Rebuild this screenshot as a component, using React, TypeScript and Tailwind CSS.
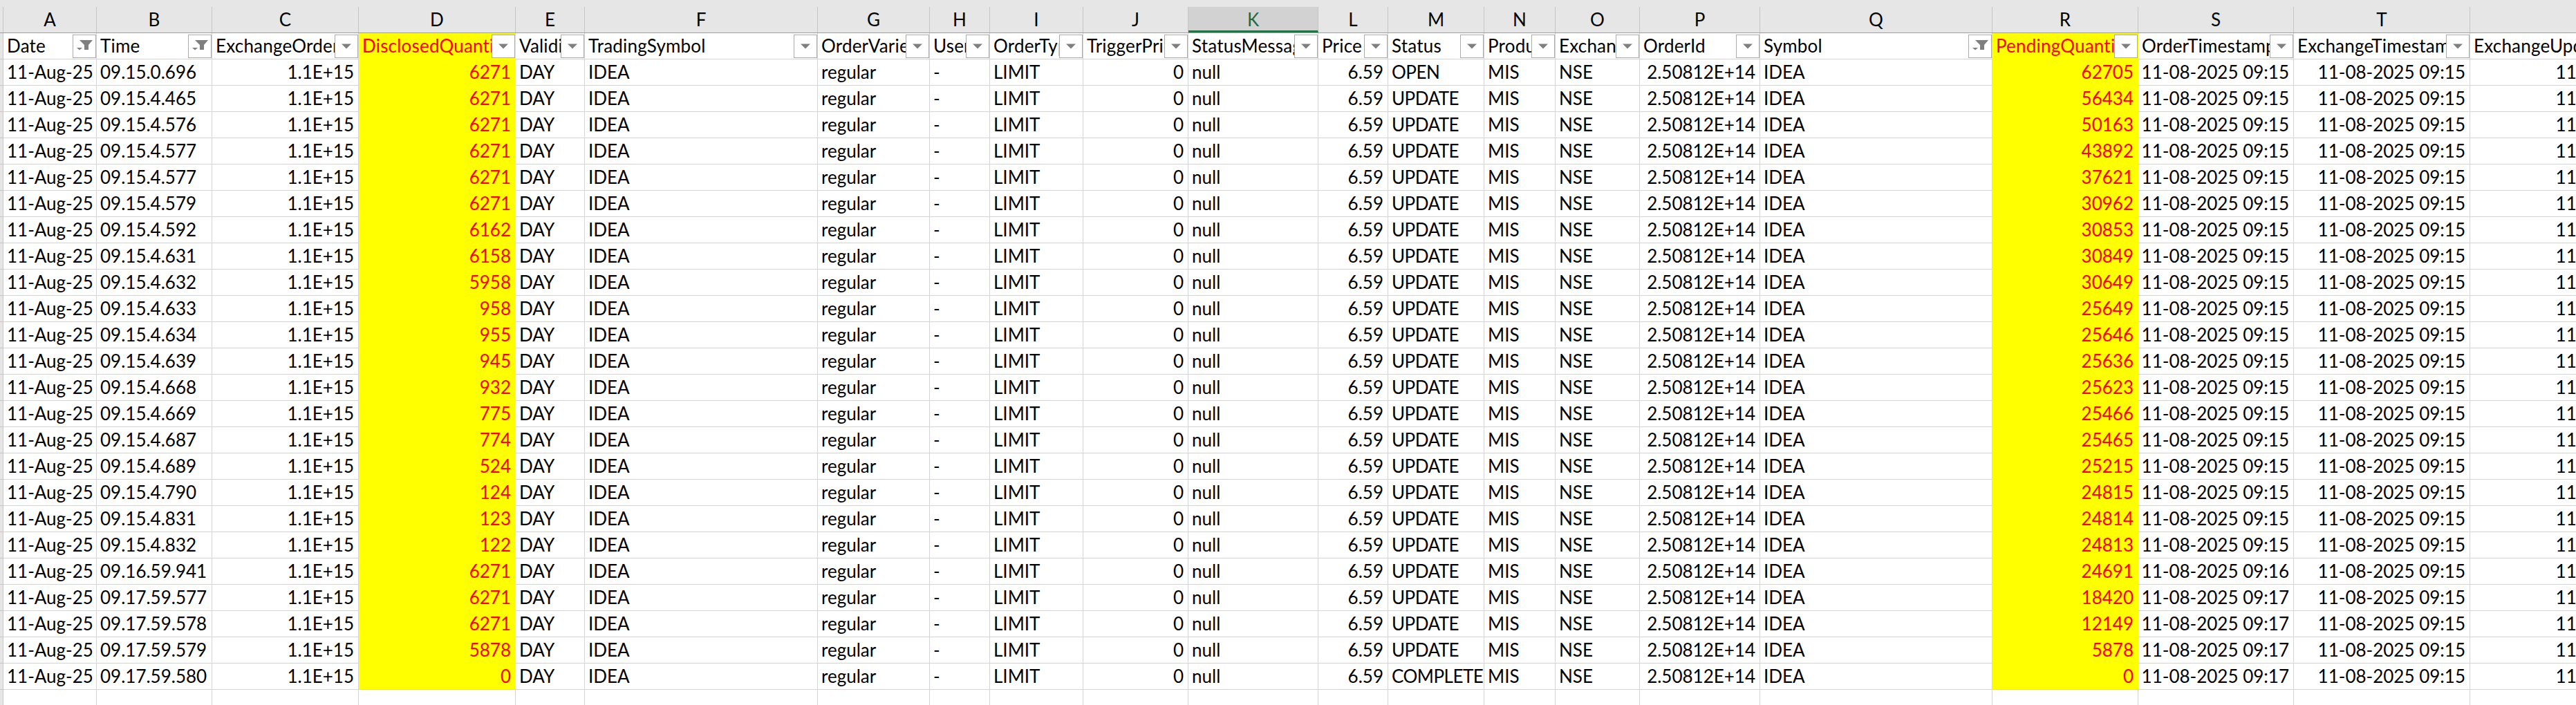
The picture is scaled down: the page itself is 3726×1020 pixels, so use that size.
type Align = "left" | "right";

type Column = {
  letter: string;
  title: string;
  width: string;
  align: Align;
  mark?: boolean;
  filtered?: boolean;
  noButton?: boolean;
  tight?: boolean;
};

const COLUMNS: Column[] = [
  { letter: "A", title: "Date", width: "w-[135px]", align: "left", filtered: true },
  { letter: "B", title: "Time", width: "w-[167px]", align: "left", filtered: true },
  { letter: "C", title: "ExchangeOrderId", width: "w-[212px]", align: "right" },
  { letter: "D", title: "DisclosedQuantity", width: "w-[227px]", align: "right", mark: true },
  { letter: "E", title: "Validity", width: "w-[100px]", align: "left" },
  { letter: "F", title: "TradingSymbol", width: "w-[337px]", align: "left" },
  { letter: "G", title: "OrderVariety", width: "w-[162px]", align: "left" },
  { letter: "H", title: "UserId", width: "w-[87px]", align: "left" },
  { letter: "I", title: "OrderType", width: "w-[135px]", align: "left" },
  { letter: "J", title: "TriggerPrice", width: "w-[152px]", align: "right" },
  { letter: "K", title: "StatusMessage", width: "w-[188px]", align: "left" },
  { letter: "L", title: "Price", width: "w-[101px]", align: "right" },
  { letter: "M", title: "Status", width: "w-[139px]", align: "left", tight: true },
  { letter: "N", title: "Product", width: "w-[103px]", align: "left" },
  { letter: "O", title: "Exchange", width: "w-[122px]", align: "left" },
  { letter: "P", title: "OrderId", width: "w-[174px]", align: "right" },
  { letter: "Q", title: "Symbol", width: "w-[336px]", align: "left", filtered: true },
  { letter: "R", title: "PendingQuantity", width: "w-[211px]", align: "right", mark: true },
  { letter: "S", title: "OrderTimestamp", width: "w-[225px]", align: "right" },
  { letter: "T", title: "ExchangeTimestamp", width: "w-[255px]", align: "right" },
  { letter: "U", title: "ExchangeUpdateTimestamp", width: "w-[344px]", align: "right", noButton: true },
];

const TIMES = [
  "09.15.0.696", "09.15.4.465", "09.15.4.576", "09.15.4.577", "09.15.4.577", "09.15.4.579",
  "09.15.4.592", "09.15.4.631", "09.15.4.632", "09.15.4.633", "09.15.4.634", "09.15.4.639",
  "09.15.4.668", "09.15.4.669", "09.15.4.687", "09.15.4.689", "09.15.4.790", "09.15.4.831",
  "09.15.4.832", "09.16.59.941", "09.17.59.577", "09.17.59.578", "09.17.59.579", "09.17.59.580",
];

const DISCLOSED = [
  6271, 6271, 6271, 6271, 6271, 6271, 6162, 6158, 5958, 958, 955, 945,
  932, 775, 774, 524, 124, 123, 122, 6271, 6271, 6271, 5878, 0,
];

const PENDING = [
  62705, 56434, 50163, 43892, 37621, 30962, 30853, 30849, 30649, 25649, 25646, 25636,
  25623, 25466, 25465, 25215, 24815, 24814, 24813, 24691, 18420, 12149, 5878, 0,
];

function orderTime(i: number) {
  if (i < 19) return "11-08-2025 09:15";
  if (i === 19) return "11-08-2025 09:16";
  return "11-08-2025 09:17";
}

const ROWS: string[][] = TIMES.map((time, i) => [
  "11-Aug-25",
  time,
  "1.1E+15",
  String(DISCLOSED[i]),
  "DAY",
  "IDEA",
  "regular",
  "-",
  "LIMIT",
  "0",
  "null",
  "6.59",
  i === 0 ? "OPEN" : i === 23 ? "COMPLETE" : "UPDATE",
  "MIS",
  "NSE",
  "2.50812E+14",
  "IDEA",
  String(PENDING[i]),
  orderTime(i),
  "11-08-2025 09:15",
  "11-08-2025 09:15",
]);

function FilterButton({ filtered }: { filtered?: boolean }) {
  return (
    <div className="absolute right-0 top-[2px] h-[34px] w-[34px] border border-[#ababab] bg-white">
      <svg viewBox="0 0 32 32" className="h-[32px] w-[32px]" fill="#7f7f7f">
        {filtered ? (
          <>
            <path d="M9 7H28L22 14V21H16V14Z" />
            <path d="M5 18H13L9 21.5Z" />
          </>
        ) : (
          <path d="M9 12.5H23L16 19.5Z" />
        )}
      </svg>
    </div>
  );
}

function LetterRow() {
  return (
    <div className="flex h-[48px] border-b border-[#9e9e9e] bg-[#e6e6e6] pt-[10px]">
      <div className="w-[5px] shrink-0 border-r border-[#c6c6c6]" />
      {COLUMNS.map((col) => (
        <div
          key={col.letter}
          className={`${col.width} shrink-0 border-r border-[#c6c6c6] text-center leading-[37px] ${
            col.letter === "K" ? "border-b-[3px] border-b-[#217346] bg-[#d2d2d2] text-[#1e6b41]" : ""
          }`}
        >
          {col.letter}
        </div>
      ))}
    </div>
  );
}

function HeaderRow() {
  return (
    <div className="flex h-[38px]">
      <div className="w-[5px] shrink-0 border-r border-b border-[#c6c6c6] bg-[#e6e6e6]" />
      {COLUMNS.map((col) => (
        <div
          key={col.letter}
          className={`relative ${col.width} shrink-0 overflow-hidden whitespace-nowrap border-r border-b pl-[5px] leading-[37px] tracking-[0.2px] ${
            col.mark ? "border-[#ffff00] bg-[#ffff00] text-[#ff0000]" : "border-[#d4d4d4]"
          }`}
        >
          {col.title}
          {!col.noButton && <FilterButton filtered={col.filtered} />}
        </div>
      ))}
    </div>
  );
}

function DataRow({ values, last }: { values: string[]; last: boolean }) {
  return (
    <div className="flex h-[38px]">
      <div className="w-[5px] shrink-0 border-r border-b border-[#c6c6c6] bg-[#e6e6e6]" />
      {COLUMNS.map((col, c) => (
        <div
          key={col.letter}
          className={`${col.width} shrink-0 overflow-hidden whitespace-nowrap border-r border-b leading-[37px] ${
            col.align === "right" ? "pr-[6px] text-right" : "pl-[5px] text-left"
          } ${col.tight ? "tracking-[-0.5px]" : ""} ${
            col.mark ? "border-r-[#ffff00] bg-[#ffff00] text-[#ff0000]" : "border-r-[#d4d4d4]"
          } ${col.mark && !last ? "border-b-[#ffff00]" : "border-b-[#d4d4d4]"}`}
        >
          {values[c]}
        </div>
      ))}
    </div>
  );
}

function BlankRow() {
  return (
    <div className="flex h-[22px]">
      <div className="w-[5px] shrink-0 border-r border-[#c6c6c6] bg-[#e6e6e6]" />
      {COLUMNS.map((col) => (
        <div key={col.letter} className={`${col.width} shrink-0 border-r border-[#d4d4d4]`} />
      ))}
    </div>
  );
}

export default function App() {
  return (
    <div className="h-[1020px] w-[3726px] overflow-hidden bg-white font-[Lato,sans-serif] text-[26px] text-black">
      <LetterRow />
      <HeaderRow />
      {ROWS.map((values, i) => (
        <DataRow key={i} values={values} last={i === ROWS.length - 1} />
      ))}
      <BlankRow />
    </div>
  );
}
